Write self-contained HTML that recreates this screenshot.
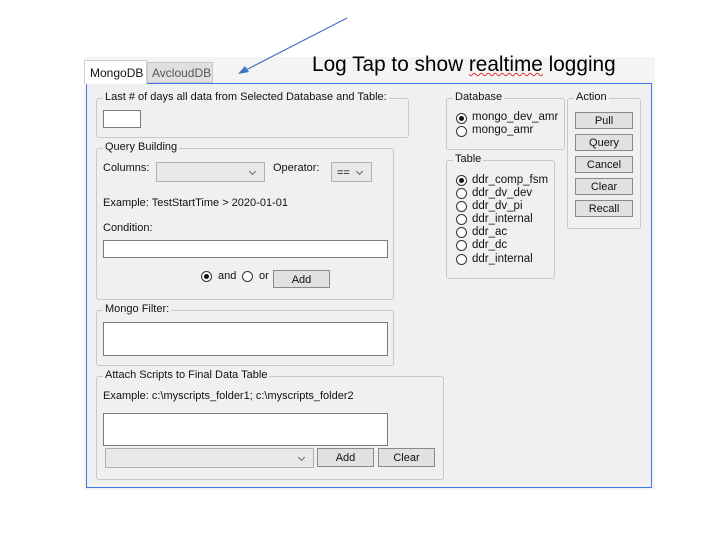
<!DOCTYPE html>
<html><head><meta charset="utf-8"><style>
*{box-sizing:border-box}
body{margin:0;width:722px;height:536px;background:#fff;position:relative;font-family:"Liberation Sans",sans-serif;font-size:11px;color:#111;overflow:hidden}
.a{position:absolute}
.bg{left:84px;top:57px;width:571px;height:433px;background:#f4f4f4}
.panel{left:86px;top:83px;width:566px;height:405px;border:1px solid #3f78e0;background:#f0f0f0}
.grp{position:absolute;border:1px solid #c8c8c8;border-radius:3px}
.lg{position:absolute;top:-8px;left:6px;background:#f0f0f0;padding:0 2px;white-space:nowrap}
.tb{position:absolute;background:#fff;border:1px solid #7a7a7a}
.btn{position:absolute;background:#e1e1e1;border:1px solid #8a8a8a;text-align:center;line-height:16px}
.cb{position:absolute;background:#e8e8e8;border:1px solid #b0b0b0}
.cb:after{content:"";position:absolute;right:9px;top:6px;width:4px;height:4px;border-right:1px solid #666;border-bottom:1px solid #666;transform:rotate(45deg)}
.r{position:absolute;width:11px;height:11px;border:1px solid #333;border-radius:50%;background:#fff}
.r.on:after{content:"";position:absolute;left:2px;top:2px;width:5px;height:5px;border-radius:50%;background:#111}
.t{position:absolute;white-space:nowrap}
</style></head><body>
<div class="a bg"></div>
<svg class="a" style="left:0;top:0" width="722" height="90"><line x1="347" y1="18" x2="244" y2="71" stroke="#4472c4" stroke-width="1.2"/><polygon points="238,74 245,66 249,72" fill="#4472c4"/></svg>
<div class="a" style="left:84px;top:60px;width:63px;height:24px;background:#fff;border:1px solid #d0d0d0;border-bottom:none;z-index:2"><span class="t" style="left:5px;top:5px;font-size:12px">MongoDB</span></div>
<div class="a" style="left:147px;top:62px;width:66px;height:21px;background:#e0e0e0;border:1px solid #c8c8c8"><span class="t" style="left:4px;top:3px;font-size:12px;color:#555">AvcloudDB</span></div>
<div class="t" style="left:312px;top:53px;font-size:20.8px;color:#000">Log Tap to show <span style="text-decoration:underline wavy #d33;text-decoration-thickness:1px">realtime</span> logging</div>
<div class="a panel"></div>

<div class="grp" style="left:96px;top:98px;width:313px;height:40px"><span class="lg">Last # of days all data from Selected Database and Table:</span></div>
<div class="tb" style="left:103px;top:110px;width:38px;height:18px"></div>

<div class="grp" style="left:96px;top:148px;width:298px;height:152px"><span class="lg">Query Building</span></div>
<span class="t" style="left:103px;top:162px">Columns:</span>
<div class="cb" style="left:156px;top:162px;width:109px;height:20px"></div>
<span class="t" style="left:273px;top:162px">Operator:</span>
<div class="cb" style="left:331px;top:162px;width:41px;height:20px"><span class="t" style="left:5px;top:4px">==</span></div>
<span class="t" style="left:103px;top:197px">Example: TestStartTime &gt; 2020-01-01</span>
<span class="t" style="left:103px;top:222px">Condition:</span>
<div class="tb" style="left:103px;top:240px;width:285px;height:18px"></div>
<div class="r on" style="left:201px;top:271px"></div><span class="t" style="left:218px;top:270px">and</span>
<div class="r" style="left:242px;top:271px"></div><span class="t" style="left:259px;top:270px">or</span>
<div class="btn" style="left:273px;top:270px;width:57px;height:18px;line-height:18px">Add</div>

<div class="grp" style="left:96px;top:310px;width:298px;height:56px"><span class="lg">Mongo Filter:</span></div>
<div class="tb" style="left:103px;top:322px;width:285px;height:34px"></div>

<div class="grp" style="left:96px;top:376px;width:348px;height:104px"><span class="lg">Attach Scripts to Final Data Table</span></div>
<span class="t" style="left:103px;top:390px">Example: c:\myscripts_folder1; c:\myscripts_folder2</span>
<div class="tb" style="left:103px;top:413px;width:285px;height:33px"></div>
<div class="cb" style="left:105px;top:448px;width:209px;height:20px"></div>
<div class="btn" style="left:317px;top:448px;width:57px;height:19px;line-height:18px">Add</div>
<div class="btn" style="left:378px;top:448px;width:57px;height:19px;line-height:18px">Clear</div>

<div class="grp" style="left:446px;top:98px;width:119px;height:52px"><span class="lg">Database</span></div>
<div class="r on" style="left:456px;top:113px"></div><span class="t" style="left:472px;top:111px;font-size:11.5px">mongo_dev_amr</span>
<div class="r" style="left:456px;top:126px"></div><span class="t" style="left:472px;top:124px;font-size:11.5px">mongo_amr</span>

<div class="grp" style="left:446px;top:160px;width:109px;height:119px"><span class="lg">Table</span></div>
<div class="r on" style="left:456px;top:175px"></div><span class="t" style="left:472px;top:174px;font-size:11.5px">ddr_comp_fsm</span>
<div class="r" style="left:456px;top:188px"></div><span class="t" style="left:472px;top:187px;font-size:11.5px">ddr_dv_dev</span>
<div class="r" style="left:456px;top:201px"></div><span class="t" style="left:472px;top:200px;font-size:11.5px">ddr_dv_pi</span>
<div class="r" style="left:456px;top:214px"></div><span class="t" style="left:472px;top:213px;font-size:11.5px">ddr_internal</span>
<div class="r" style="left:456px;top:227px"></div><span class="t" style="left:472px;top:226px;font-size:11.5px">ddr_ac</span>
<div class="r" style="left:456px;top:240px"></div><span class="t" style="left:472px;top:239px;font-size:11.5px">ddr_dc</span>
<div class="r" style="left:456px;top:254px"></div><span class="t" style="left:472px;top:253px;font-size:11.5px">ddr_internal</span>

<div class="grp" style="left:567px;top:98px;width:74px;height:131px"><span class="lg">Action</span></div>
<div class="btn" style="left:575px;top:112px;width:58px;height:17px">Pull</div>
<div class="btn" style="left:575px;top:134px;width:58px;height:17px">Query</div>
<div class="btn" style="left:575px;top:156px;width:58px;height:17px">Cancel</div>
<div class="btn" style="left:575px;top:178px;width:58px;height:17px">Clear</div>
<div class="btn" style="left:575px;top:200px;width:58px;height:17px">Recall</div>
</body></html>
